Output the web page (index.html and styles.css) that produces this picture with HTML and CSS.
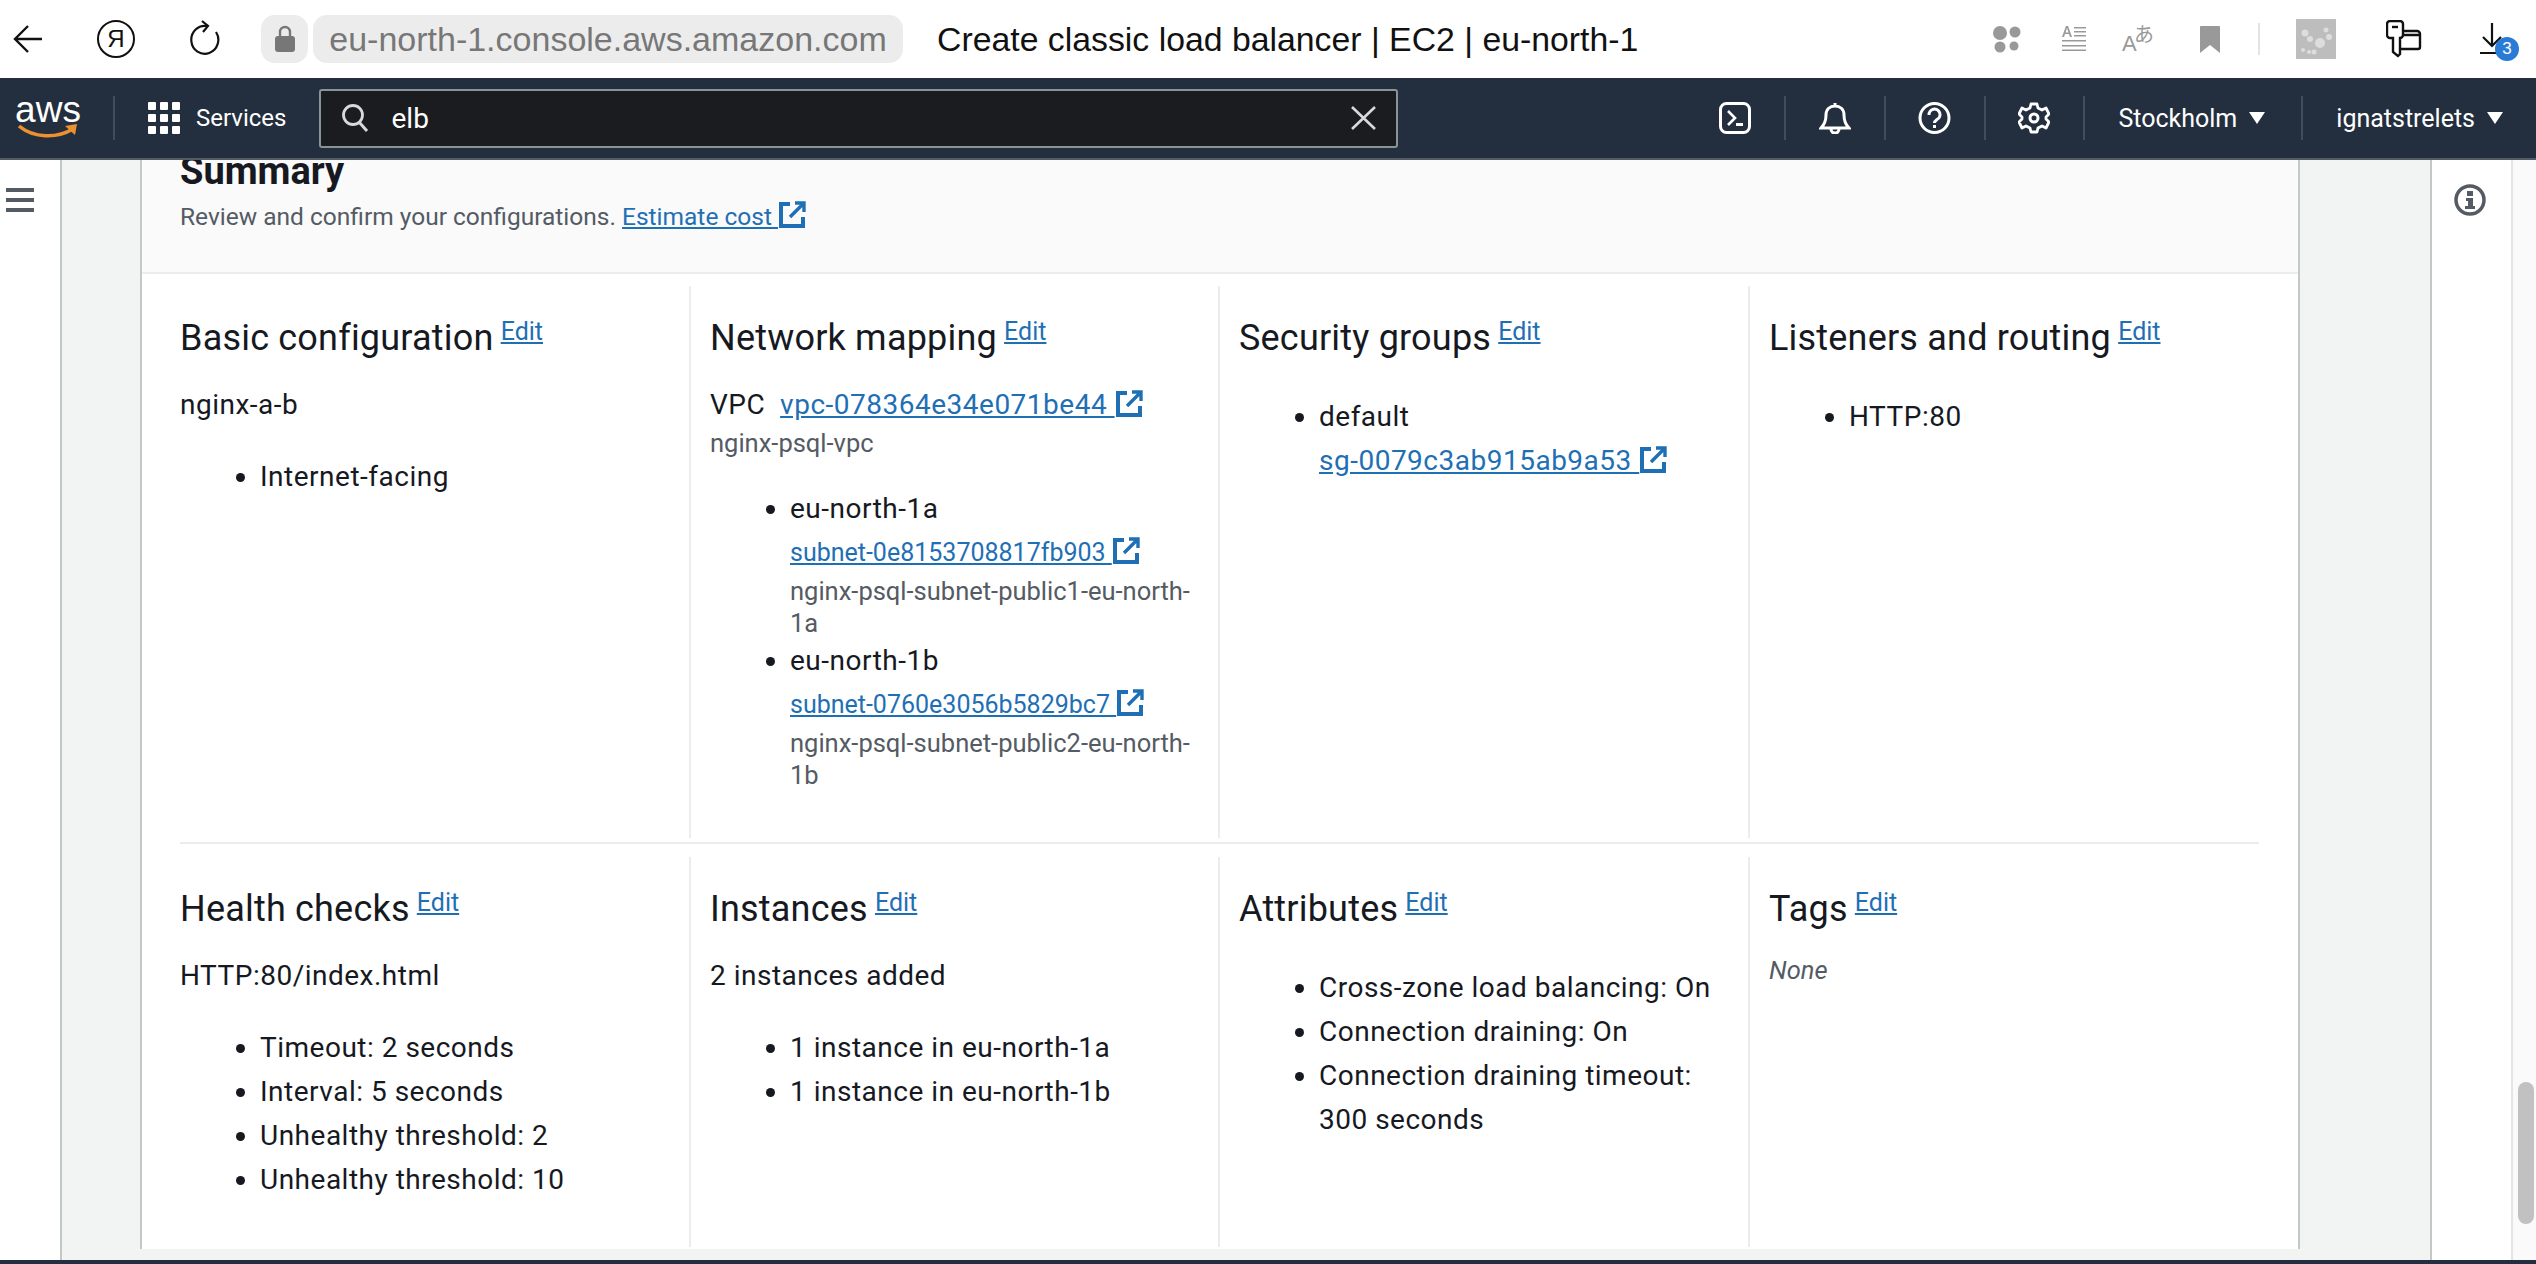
FILE: index.html
```html
<!DOCTYPE html>
<html lang="en">
<head>
    <meta charset="UTF-8">
    <title>Create classic load balancer | EC2 | eu-north-1</title>
    <link rel="stylesheet" href="styles.css">
</head>
<body>
    <svg class="defs" width="0" height="0">
        <symbol id="ext" viewBox="0 0 28 28">
            <path d="M12 3H3V25H25V16" fill="none" stroke="currentColor" stroke-width="4"/>
            <path d="M17 2H26V11M25 3L12 16" fill="none" stroke="currentColor" stroke-width="3.4"/>
        </symbol>
    </svg>

    <header class="browser-bar">
        <svg class="b-back" width="30" height="32" viewBox="0 0 30 32"><path d="M15 3L2 16L15 29M2 16H29" fill="none" stroke="#111" stroke-width="2.4"/></svg>
        <span class="b-yandex">Я</span>
        <svg class="b-reload" width="30" height="38" viewBox="0 0 30 38"><path d="M17 6A13.500 14 0 1 0 26 12" fill="none" stroke="#111" stroke-width="2.2"/><path d="M12 1L18 6L13 12" fill="none" stroke="#111" stroke-width="2.2"/></svg>
        <span class="b-lock">
            <svg width="22" height="28" viewBox="0 0 22 28"><path d="M6 12V7a5 5 0 0 1 10 0V12" fill="none" stroke="#777" stroke-width="2.4"/><rect x="1" y="11" width="20" height="16" rx="3" fill="#777"/></svg>
        </span>
        <span class="b-url">eu-north-1.console.aws.amazon.com</span>
        <span class="b-title">Create classic load balancer | EC2 | eu-north-1</span>
        <span class="b-tools">
            <svg class="t-dots" width="30" height="28" viewBox="0 0 30 28" fill="#999"><circle cx="8" cy="8" r="7"/><circle cx="23" cy="7" r="5.500"/><circle cx="8" cy="22" r="5.500"/><circle cx="22" cy="21" r="4.500"/></svg>
            <svg class="t-reader" width="24" height="26" viewBox="0 0 24 26" fill="#999"><path d="M0 11L4 0H6L10 11H8L7 8H3L2 11ZM3.500 6.500H6.500L5 2Z"/><path d="M12 1H24V2.500H12ZM12 5H24V6.500H12ZM12 9H24V10.500H12ZM0 14H24V15.500H0ZM0 19H24V20.500H0ZM0 23.500H24V25H0Z"/></svg>
            <span class="t-lang"><span class="t-lang-a">A</span><span class="t-lang-j">あ</span></span>
            <svg class="t-mark" width="20" height="27" viewBox="0 0 20 27"><path d="M1 0H19a1 1 0 0 1 1 1V27L10 19L0 27V1a1 1 0 0 1 1-1Z" fill="#999"/></svg>
            <span class="t-sep"></span>
            <svg class="t-tile" width="40" height="40" viewBox="0 0 40 40"><rect width="40" height="40" fill="#bdbdbd"/><g fill="#ddd"><circle cx="9" cy="14" r="3.500"/><circle cx="14" cy="20" r="3"/><circle cx="24" cy="24" r="5"/><circle cx="30" cy="11" r="2.500"/><circle cx="33" cy="18" r="3"/><circle cx="18" cy="33" r="2.500"/><circle cx="7" cy="31" r="2"/><circle cx="13" cy="33" r="2"/></g></svg>
            <svg class="t-key" width="36" height="38" viewBox="0 0 36 38"><path d="M12 36L7 32V18H4a3 3 0 0 1-3-3V4a3 3 0 0 1 3-3H14a3 3 0 0 1 3 3V15a3 3 0 0 1-3 3V34Z" fill="none" stroke="#111" stroke-width="2.400"/><path d="M6 7H12" stroke="#111" stroke-width="2.400"/><path d="M17 11H31a3 3 0 0 1 3 3V27a2 2 0 0 1-2 2H14M17 15H34" fill="none" stroke="#111" stroke-width="2.400"/></svg>
            <span class="t-down">
                <svg width="30" height="32" viewBox="0 0 30 32"><path d="M12 0V23M3 14L12 23L21 14M0 30H17" fill="none" stroke="#111" stroke-width="2.200"/></svg>
                <span class="t-badge">3</span>
            </span>
        </span>
    </header>

    <nav class="aws-nav">
        <a class="aws-logo">
            <span class="aws-word">aws</span>
            <svg width="60" height="16" viewBox="0 0 60 16"><path d="M1 3C16 15 38 16 55 6" fill="none" stroke="#ec912d" stroke-width="3.500"/><path d="M47 3L59 1L57 12Z" fill="#ec912d"/></svg>
        </a>
        <span class="nav-sep first"></span>
        <svg class="nav-grid" width="32" height="32" viewBox="0 0 32 32" fill="#fff"><rect width="8" height="8" rx="1"/><rect x="12" width="8" height="8" rx="1"/><rect x="24" width="8" height="8" rx="1"/><rect y="12" width="8" height="8" rx="1"/><rect x="12" y="12" width="8" height="8" rx="1"/><rect x="24" y="12" width="8" height="8" rx="1"/><rect y="24" width="8" height="8" rx="1"/><rect x="12" y="24" width="8" height="8" rx="1"/><rect x="24" y="24" width="8" height="8" rx="1"/></svg>
        <span class="nav-services">Services</span>
        <div class="nav-search">
            <svg width="28" height="28" viewBox="0 0 28 28"><circle cx="12" cy="11" r="9.500" fill="none" stroke="#d5dbdb" stroke-width="2.800"/><path d="M18 18L26 27" stroke="#d5dbdb" stroke-width="3"/></svg>
            <span class="nav-query">elb</span>
            <svg class="nav-clear" width="25" height="24" viewBox="0 0 25 24"><path d="M1 1L24 23M24 1L1 23" stroke="#d5dbdb" stroke-width="2.600"/></svg>
        </div>
        <div class="nav-right">
            <svg width="32" height="32" viewBox="0 0 32 32"><rect x="1.500" y="1.500" width="29" height="29" rx="6" fill="none" stroke="#fff" stroke-width="3"/><path d="M9 9L16 16L9 23" fill="none" stroke="#fff" stroke-width="2.600"/><rect x="17" y="21" width="7" height="3" fill="#fff"/></svg>
            <span class="nav-sep s1"></span>
            <svg class="i-bell" width="32" height="32" viewBox="0 0 32 32"><path d="M2 26C6 22 7 19 7 13C7 7 11 4 16 4C21 4 25 7 25 13C25 19 26 22 30 26ZM16 1V4M12 27a4 4 0 0 0 8 0" fill="none" stroke="#fff" stroke-width="3"/></svg>
            <span class="nav-sep s2"></span>
            <svg class="i-help" width="33" height="32" viewBox="0 0 33 32"><circle cx="16.500" cy="16" r="14.500" fill="none" stroke="#fff" stroke-width="3"/><path d="M11 13a5.500 5.500 0 1 1 8 4.500C17 19 16.500 19.500 16.500 21" fill="none" stroke="#fff" stroke-width="3"/><rect x="15" y="23" width="3" height="3" fill="#fff"/></svg>
            <span class="nav-sep s3"></span>
            <svg class="i-gear" width="32" height="32" viewBox="0 0 32 32"><circle cx="16" cy="16" r="4" fill="none" stroke="#fff" stroke-width="3"/><path d="M13 2H19L20 6L24 8L28 6L31 12L28 15V17L31 20L28 26L24 24L20 26L19 30H13L12 26L8 24L4 26L1 20L4 17V15L1 12L4 6L8 8L12 6Z" fill="none" stroke="#fff" stroke-width="2.800" stroke-linejoin="round"/></svg>
            <span class="nav-sep s4"></span>
            <span class="nav-menu region">Stockholm</span><span class="nav-caret"></span>
            <span class="nav-sep s5"></span>
            <span class="nav-menu user">ignatstrelets</span><span class="nav-caret"></span>
        </div>
    </nav>

    <main class="console">
        <div class="rail-left">
            <svg width="28" height="24" viewBox="0 0 28 24" fill="#545b64"><rect width="28" height="4"/><rect y="10" width="28" height="4"/><rect y="20" width="28" height="4"/></svg>
        </div>
        <div class="content">
            <section class="card">
                <div class="card-head">
                    <h2>Summary</h2>
                    <p class="card-desc">Review and confirm your configurations. <a class="link" href="#">Estimate cost <svg class="ext" width="28" height="28"><use href="#ext"/></svg></a></p>
                </div>
                <div class="card-body">
                    <div class="row first">
                        <div class="col">
                            <h3>Basic configuration <a class="edit" href="#">Edit</a></h3>
                            <p class="line">nginx-a-b</p>
                            <ul>
                                <li>Internet-facing</li>
                            </ul>
                        </div>
                        <div class="col">
                            <h3>Network mapping <a class="edit" href="#">Edit</a></h3>
                            <p class="line">VPC &nbsp;<a class="link" href="#">vpc-078364e34e071be44 <svg class="ext" width="28" height="28"><use href="#ext"/></svg></a></p>
                            <p class="small">nginx-psql-vpc</p>
                            <ul class="subnets">
                                <li>eu-north-1a
                                    <a class="link sub" href="#">subnet-0e8153708817fb903 <svg class="ext" width="28" height="28"><use href="#ext"/></svg></a>
                                    <p class="small">nginx-psql-subnet-public1-eu-north-<br>1a</p>
                                </li>
                                <li>eu-north-1b
                                    <a class="link sub" href="#">subnet-0760e3056b5829bc7 <svg class="ext" width="28" height="28"><use href="#ext"/></svg></a>
                                    <p class="small">nginx-psql-subnet-public2-eu-north-<br>1b</p>
                                </li>
                            </ul>
                        </div>
                        <div class="col">
                            <h3>Security groups <a class="edit" href="#">Edit</a></h3>
                            <ul class="flush">
                                <li>default<br><a class="link" href="#">sg-0079c3ab915ab9a53 <svg class="ext" width="28" height="28"><use href="#ext"/></svg></a></li>
                            </ul>
                        </div>
                        <div class="col">
                            <h3>Listeners and routing <a class="edit" href="#">Edit</a></h3>
                            <ul class="flush">
                                <li>HTTP:80</li>
                            </ul>
                        </div>
                    </div>
                    <div class="row second">
                        <div class="col">
                            <h3>Health checks <a class="edit" href="#">Edit</a></h3>
                            <p class="line">HTTP:80/index.html</p>
                            <ul>
                                <li>Timeout: 2 seconds</li>
                                <li>Interval: 5 seconds</li>
                                <li>Unhealthy threshold: 2</li>
                                <li>Unhealthy threshold: 10</li>
                            </ul>
                        </div>
                        <div class="col">
                            <h3>Instances <a class="edit" href="#">Edit</a></h3>
                            <p class="line">2 instances added</p>
                            <ul>
                                <li>1 instance in eu-north-1a</li>
                                <li>1 instance in eu-north-1b</li>
                            </ul>
                        </div>
                        <div class="col">
                            <h3>Attributes <a class="edit" href="#">Edit</a></h3>
                            <ul class="flush">
                                <li>Cross-zone load balancing: On</li>
                                <li>Connection draining: On</li>
                                <li>Connection draining timeout:<br>300 seconds</li>
                            </ul>
                        </div>
                        <div class="col">
                            <h3>Tags <a class="edit" href="#">Edit</a></h3>
                            <p class="small none">None</p>
                        </div>
                    </div>
                </div>
            </section>
        </div>
        <div class="rail-right">
            <svg width="32" height="32" viewBox="0 0 32 32"><circle cx="16" cy="16" r="14" fill="none" stroke="#545b64" stroke-width="3.500"/><rect x="13" y="7" width="6" height="5" fill="#545b64"/><path d="M12 14H19V22H21V25H11V22H14V17H12Z" fill="#545b64"/></svg>
        </div>
        <div class="scrollbar"><span class="thumb"></span></div>
    </main>
    <div class="bottom-bar"></div>
</body>
</html>
```

FILE: styles.css
```css
html, body {
    margin: 0;
    padding: 0;
}

body {
    width: 2536px;
    height: 1264px;
    overflow: hidden;
    display: flex;
    flex-direction: column;
    font-family: Roboto, "Noto Sans", sans-serif;
    color: #16191f;
    background-color: #fff;
}

.defs {
    position: absolute;
}

/* browser chrome */
.browser-bar {
    height: 78px;
    flex: none;
    display: flex;
    align-items: center;
    font-family: "Liberation Sans", Arial, sans-serif;
}

.b-back {
    margin-left: 13px;
}

.b-yandex {
    width: 34px;
    height: 34px;
    margin-left: 54px;
    border: 2px solid #111;
    border-radius: 50%;
    display: flex;
    align-items: center;
    justify-content: center;
    font-size: 24px;
    color: #111;
}

.b-reload {
    margin-left: 55px;
}

.b-lock {
    width: 47px;
    height: 48px;
    margin-left: 41px;
    background-color: #ececec;
    border-radius: 14px;
    display: flex;
    align-items: center;
    justify-content: center;
}

.b-url {
    width: 590px;
    height: 48px;
    margin-left: 5px;
    background-color: #ececec;
    border-radius: 14px;
    font-size: 34px;
    line-height: 48px;
    text-align: center;
    color: #777;
    white-space: nowrap;
}

.b-title {
    margin-left: 34px;
    font-size: 33.800px;
    color: #111;
    white-space: nowrap;
}

.b-tools {
    position: absolute;
    left: 1992px;
    top: 0;
    height: 78px;
    display: flex;
    align-items: center;
}

.t-reader {
    margin-left: 40px;
}

.t-lang {
    width: 32px;
    height: 32px;
    margin-left: 36px;
    position: relative;
    color: #999;
}

.t-lang-a {
    position: absolute;
    left: 0;
    bottom: -2px;
    font-size: 22px;
}

.t-lang-j {
    position: absolute;
    right: 0;
    top: -4px;
    font-size: 20px;
    font-family: "Noto Sans CJK JP", sans-serif;
}

.t-mark {
    margin-left: 46px;
}

.t-sep {
    width: 2px;
    height: 32px;
    margin-left: 38px;
    background-color: #e4e4e4;
}

.t-tile {
    margin-left: 36px;
}

.t-key {
    margin-left: 50px;
}

.t-down {
    margin-left: 58px;
    position: relative;
    display: flex;
}

.t-badge {
    position: absolute;
    left: 15px;
    top: 14px;
    width: 24px;
    height: 24px;
    border-radius: 50%;
    background-color: #2a7bd6;
    color: #fff;
    font-size: 17px;
    line-height: 24px;
    text-align: center;
}

/* aws top nav */
.aws-nav {
    height: 80px;
    flex: none;
    border-bottom: 2px solid #545b64;
    background-color: #232f3e;
    display: flex;
    align-items: center;
    color: #fff;
    position: relative;
}

.aws-logo {
    width: 60px;
    margin-left: 18px;
    display: flex;
    flex-direction: column;
    align-items: center;
}

.aws-word {
    font-family: "Liberation Sans", Arial, sans-serif;
    font-size: 37px;
    line-height: 26px;
}

.nav-sep {
    width: 2px;
    height: 44px;
    background-color: #414d5c;
}

.nav-sep.first {
    margin-left: 35px;
}

.nav-grid {
    margin-left: 33px;
}

.nav-services {
    margin-left: 16px;
    font-size: 24px;
}

.nav-search {
    width: 1075px;
    height: 55px;
    margin-left: 33px;
    border: 2px solid #879596;
    border-radius: 3px;
    background-color: #1a1c20;
    display: flex;
    align-items: center;
}

.nav-search svg {
    margin-left: 20px;
}

.nav-query {
    margin-left: 22px;
    font-size: 28px;
}

.nav-search .nav-clear {
    margin-left: auto;
    margin-right: 20px;
}

.nav-right {
    margin-left: 321px;
    display: flex;
    align-items: center;
}

.nav-sep.s1 {
    margin-left: 33px;
}

.i-bell {
    margin-left: 33px;
}

.i-help,
.i-gear {
    margin-left: 32px;
}

.nav-sep.s2,
.nav-sep.s3,
.nav-sep.s4 {
    margin-left: 33px;
}

.nav-menu {
    font-size: 25px;
}

.nav-menu.region,
.nav-menu.user {
    margin-left: 33px;
}

.nav-caret {
    width: 0;
    height: 0;
    margin-left: 12px;
    border-left: 8px solid transparent;
    border-right: 8px solid transparent;
    border-top: 12px solid #fff;
}

.nav-sep.s5 {
    margin-left: 36px;
}

/* console layout */
.console {
    height: 1100px;
    flex: none;
    display: flex;
    overflow: hidden;
}

.rail-left {
    width: 54px;
    flex: none;
    border-right: 2px solid #c4c7c8;
    padding: 28px 0 0 6px;
}

.content {
    width: 2368px;
    flex: none;
    box-sizing: border-box;
    padding: 0 130px 0 78px;
    background-color: #f2f3f3;
}

.card {
    height: 100%;
    border-left: 2px solid #c4c7c8;
    border-right: 2px solid #c4c7c8;
    background-color: #fff;
}

.card-head {
    height: 123px;
    padding-left: 38px;
    border-bottom: 2px solid #eaeded;
    background-color: #fafafa;
}

.card-head h2 {
    margin: -11px 0 0;
    font-size: 38px;
    line-height: 44px;
    font-weight: 700;
}

.card-desc {
    margin: 8px 0 0;
    font-size: 24.500px;
    line-height: 32px;
    color: #545b64;
}

.card-body {
    padding: 12px 39px 0 38px;
}

.row {
    display: grid;
    grid-template-columns: 509px 529px 530px 1fr;
    letter-spacing: 0.5px;
}

.row.first {
    height: 552px;
    padding-bottom: 4px;
    border-bottom: 2px solid #eaeded;
}

.row.second {
    height: 390px;
    margin-top: 13px;
}

.col {
    padding: 24px 19px 0;
    border-left: 2px solid #eaeded;
}

.col:first-child {
    padding-left: 0;
    border-left: 0;
}

h3 {
    height: 49px;
    margin: 0;
    font-size: 36px;
    line-height: 44px;
    font-weight: 400;
    letter-spacing: 0.2px;
    white-space: nowrap;
}

.line {
    margin: 24px 0 0;
    font-size: 28px;
    line-height: 44px;
}

.small {
    margin: 0;
    font-size: 25.500px;
    line-height: 32px;
    letter-spacing: 0;
    color: #545b64;
}

.none {
    margin-top: 24px;
    font-style: italic;
}

ul {
    margin: 28px 0 0;
    padding: 0 0 0 80px;
    font-size: 28px;
    line-height: 44px;
    list-style: disc;
}

ul.flush {
    margin-top: 36px;
}

.link,
.edit {
    color: #1f6fb5;
    text-decoration: underline;
}

.edit {
    font-size: 25px;
    vertical-align: 10px;
    letter-spacing: 0;
    margin-left: -2px;
}

.sub {
    display: block;
    font-size: 25px;
    letter-spacing: 0;
}

.ext {
    vertical-align: -4px;
}

/* right rail */
.rail-right {
    width: 81px;
    flex: none;
    border-left: 2px solid #c4c7c8;
    box-sizing: border-box;
    padding: 24px 0 0 22px;
}

.scrollbar {
    width: 25px;
    flex: none;
    box-sizing: border-box;
    border-left: 2px solid #e4e4e4;
    background-color: #fafafa;
    position: relative;
}

.thumb {
    position: absolute;
    left: 5px;
    top: 922px;
    width: 16px;
    height: 142px;
    border-radius: 8px;
    background-color: #c1c1c1;
}

.bottom-bar {
    height: 4px;
    flex: none;
    background-color: #232f3e;
}
```
